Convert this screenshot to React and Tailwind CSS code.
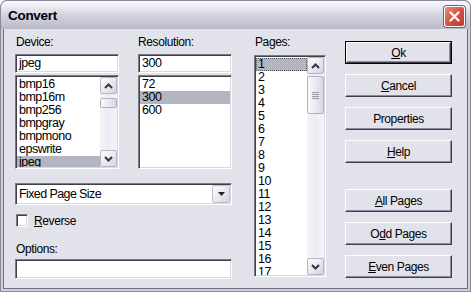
import React from 'react';

const FONT = "font-['Liberation_Sans',Arial,sans-serif]";

const sunken = 'border border-t-[#7a7a88] border-l-[#7a7a88] border-b-white border-r-white shadow-[inset_1px_1px_0_#404048,inset_-1px_-1px_0_#d8d8e0] bg-white';

const Chevron = ({ down }) => (
  <svg width="9" height="6" viewBox="0 0 9 6">
    <path d={down ? 'M1 1 L4.5 4.5 L8 1' : 'M1 5 L4.5 1.5 L8 5'} fill="none" stroke="#33334a" strokeWidth="2" />
  </svg>
);

const ScrollBtn = ({ down }) => (
  <div className="w-[17px] h-[17px] shrink-0 rounded-[2px] border border-[#b4b4c4] bg-gradient-to-br from-white to-[#d4d4e0] flex items-center justify-center">
    <Chevron down={down} />
  </div>
);

const ScrollBar = ({ thumbTop, thumbH, grip }) => (
  <div className="w-[17px] h-full flex flex-col bg-gradient-to-r from-[#f4f4f8] via-[#ececf4] to-[#f4f4f8]">
    <ScrollBtn />
    <div className="flex-1 flex flex-col">
      <div style={{ height: thumbTop }} />
      <div style={{ height: thumbH }} className="rounded-[2px] border border-[#b0b0c0] bg-gradient-to-r from-[#fafafc] to-[#d8d8e4] flex flex-col items-center justify-center gap-[1px]">
        {grip && [0, 1, 2, 3].map((i) => <div key={i} className="w-[7px] h-[1px] bg-[#9a9aac]" />)}
      </div>
    </div>
    <ScrollBtn down />
  </div>
);

const Btn = ({ children, def }) => (
  <div className={def ? 'border border-black h-[23px]' : 'h-[23px]'}>
    <div className="h-full border border-t-white border-l-white border-b-[#404048] border-r-[#404048] shadow-[inset_-1px_-1px_0_#8a8a9a] bg-[#e2e2ea] flex items-center justify-center text-[12px] tracking-[-0.4px] text-black">
      {children}
    </div>
  </div>
);

const U = ({ children }) => <span className="underline underline-offset-[1px]">{children}</span>;

const Item = ({ children, sel, focus }) => (
  <div className={'h-[13px] leading-[13px] pl-[2px] text-[12.5px] tracking-[-0.5px] ' + (sel ? 'bg-[#b4b5c2] ' : '') + (focus ? 'outline outline-1 outline-dotted outline-[#555] -outline-offset-1' : '')}>
    {children}
  </div>
);

export default function App() {
  const devices = ['bmp16', 'bmp16m', 'bmp256', 'bmpgray', 'bmpmono', 'epswrite', 'jpeg'];
  const pages = Array.from({ length: 17 }, (_, i) => i + 1);
  return (
    <div className={'w-[471px] h-[292px] flex flex-col bg-[#8a8a9c] rounded-t-[7px] overflow-hidden text-black ' + FONT}>
      <div className="h-[29px] shrink-0 flex items-center justify-between pl-[7px] pr-[5px] bg-gradient-to-b from-[#fbfbfd] via-[#d4d4e0] to-[#b8b8c8] border-t border-x border-[#8a8a9c] rounded-t-[7px]">
        <span className="font-bold text-[13.5px] tracking-[-0.3px] pt-[2px]">Convert</span>
        <div className="w-[21px] h-[21px] mt-[2px] rounded-[3px] border border-white bg-gradient-to-br from-[#e88a7c] via-[#d25444] to-[#b83a2c] flex items-center justify-center shadow-[0_0_0_1px_#a05050]">
          <svg width="11" height="11" viewBox="0 0 11 11">
            <path d="M1.5 1.5 L9.5 9.5 M9.5 1.5 L1.5 9.5" stroke="white" strokeWidth="2.2" strokeLinecap="round" />
          </svg>
        </div>
      </div>
      <div className="flex-1 mx-[1px] mb-[1px] border-x-[2px] border-b-[2px] border-[#cfcfdb]">
        <div className="h-full border-x border-b border-[#6e6e84] bg-[#e2e2ea] flex pl-[11px] pt-[7px] text-[12px] tracking-[-0.4px]">
          <div className="w-[217px] flex flex-col">
            <div className="flex gap-[19px]">
              <div className="w-[104px] flex flex-col">
                <div className="h-[13px] leading-[13px] pl-[1px]">Device:</div>
                <div className={'mt-[5px] h-[19px] pl-[3px] leading-[17px] text-[12.5px] tracking-[-0.5px] ' + sunken}>jpeg</div>
                <div className={'mt-[2px] h-[94px] flex p-[1px] ' + sunken}>
                  <div className="flex-1 pt-[1px] overflow-hidden">
                    {devices.map((d) => <Item key={d} sel={d === 'jpeg'}>{d}</Item>)}
                  </div>
                  <ScrollBar thumbTop={4} thumbH={10} />
                </div>
              </div>
              <div className="w-[94px] flex flex-col">
                <div className="h-[13px] leading-[13px]">Resolution:</div>
                <div className={'mt-[5px] h-[19px] pl-[3px] leading-[17px] text-[12.5px] tracking-[-0.5px] ' + sunken}>300</div>
                <div className={'mt-[2px] h-[94px] p-[1px] pt-[2px] ' + sunken}>
                  {['72', '300', '600'].map((r) => <Item key={r} sel={r === '300'}>{r}</Item>)}
                </div>
              </div>
            </div>
            <div className={'mt-[14px] h-[22px] flex items-center pl-[3px] pr-[1px] ' + sunken}>
              <span className="flex-1 text-[12.5px] tracking-[-0.6px]">Fixed Page Size</span>
              <div className="w-[18px] h-[18px] rounded-[2px] border border-[#c0c0cc] bg-gradient-to-br from-white to-[#d4d4e0] flex items-center justify-center">
                <svg width="7" height="4" viewBox="0 0 7 4"><path d="M0 0 H7 L3.5 4 Z" fill="#202030" /></svg>
              </div>
            </div>
            <div className="mt-[9px] h-[13px] flex items-center gap-[6px] pl-[1px]">
              <div className={'w-[12px] h-[13px] ' + sunken} />
              <span><U>R</U>everse</span>
            </div>
            <div className="mt-[16px] h-[13px] leading-[13px] pl-[1px]">Options:</div>
            <div className={'mt-[3px] h-[20px] ' + sunken} />
          </div>
          <div className="ml-[22px] w-[72px] flex flex-col">
            <div className="h-[13px] leading-[13px] pl-[1px]">Pages:</div>
            <div className={'mt-[6px] h-[222px] flex p-[1px] ' + sunken}>
              <div className="flex-1 pt-[1px] overflow-hidden">
                {pages.map((p) => <Item key={p} sel={p === 1} focus={p === 1}>{p}</Item>)}
              </div>
              <ScrollBar thumbTop={2} thumbH={38} grip />
            </div>
          </div>
          <div className="ml-[19px] w-[107px] flex flex-col pt-[5px]">
            <div className="flex flex-col gap-[10px]">
              <Btn def><U>O</U>k</Btn>
              <Btn><U>C</U>ancel</Btn>
              <Btn>Properties</Btn>
              <Btn><U>H</U>elp</Btn>
            </div>
            <div className="mt-[26px] flex flex-col gap-[10px]">
              <Btn><U>A</U>ll Pages</Btn>
              <Btn>O<U>d</U>d Pages</Btn>
              <Btn><U>E</U>ven Pages</Btn>
            </div>
          </div>
        </div>
      </div>
    </div>
  );
}
